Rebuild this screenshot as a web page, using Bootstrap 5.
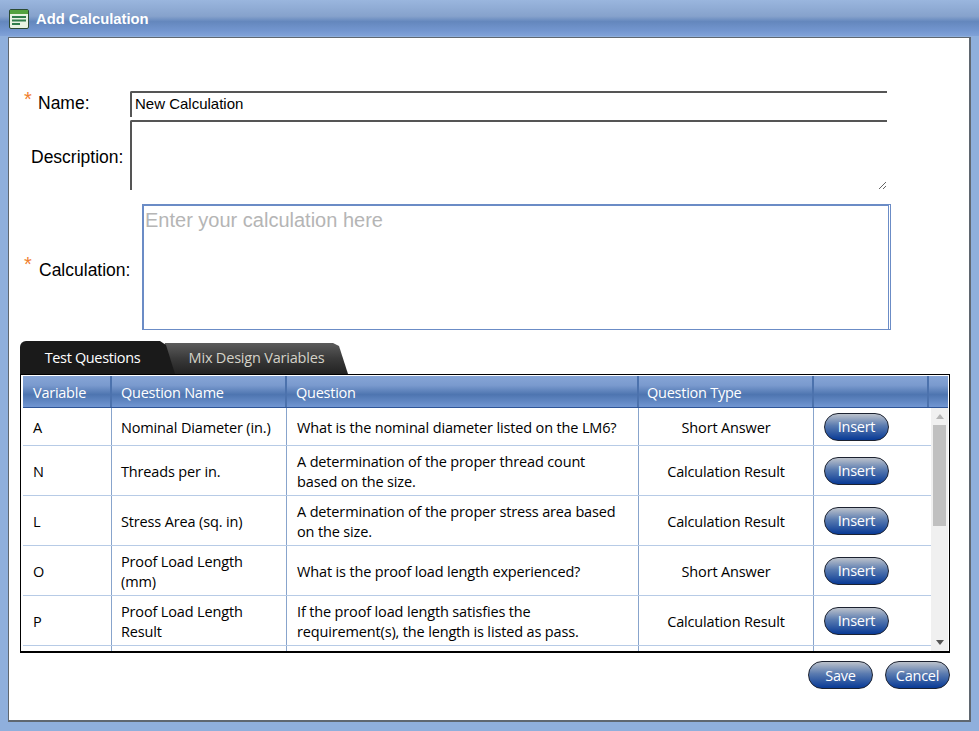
<!DOCTYPE html>
<html lang="en"><head><meta charset="utf-8"><title>Add Calculation</title>
<link href="https://cdn.jsdelivr.net/npm/bootstrap@5.3.0/dist/css/bootstrap.min.css" rel="stylesheet">
<style>
html,body{height:731px;overflow:hidden;background:#8fafdc;}
body{font-family:"Liberation Sans",Arial,sans-serif;color:#000;}
.win-title{height:36px;padding:2px 0 0 9px;gap:7px;background:linear-gradient(#9ab6de 0,#86a2cc 45%,#6487bd 60%,#7396cf 85%,#80a2d8 100%);color:#fff;font-weight:700;font-size:14.8px;}
.win-body{margin:1px 8px 0 8px;height:685px;background:#fff;border:solid #5f6770;border-width:1px 2px 2px 1px;width:963px;padding:0 19px 0 11px;}
.frm-row{display:flex;align-items:center;}
.req{color:#f08030;font-size:20px;width:14px;margin-left:4px;line-height:20px;flex:none;margin-top:-11px;}
.calc-row .req{margin-top:-6px;}
.lbl{font-size:17.5px;flex:none;margin:0;}
.lbl-n{width:92px;padding-bottom:2px;}
.lbl-c{width:104px;padding:6px 0 0 1px;}
.name-row{margin-top:53px;height:26px;}
.name-in{width:757px;height:26px;border:0;border-top:2px solid #555;border-left:2px solid #555;padding:0 3px 4px;font:15px "Liberation Sans",Arial,sans-serif;outline:0;border-radius:2px 0 0 0;}
.desc-row{margin-top:3px;height:70px;}
.desc-lbl{margin-left:11px;width:99px;padding-top:4px;}
.desc-in{width:757px;height:70px;border:0;border-top:2px solid #555;border-left:2px solid #555;outline:0;border-radius:2px 0 0 0;display:block;}
.calc-row{margin-top:14px;height:126px;}
.calc-in{width:749px;height:126px;border:2px solid #6b8cc6;border-right:3px double #6b8cc6;border-bottom-width:1px;outline:0;padding:3px 0 0 1px;font:20px "Liberation Sans",Arial,sans-serif;resize:none;}
.calc-in::placeholder{color:#b5b5b5;opacity:1;}
.tab-strip{margin-top:11px;height:33px;font:14.5px "Segoe UI","Open Sans",sans-serif;align-items:flex-end;}
.tab-a,.tab-b{display:flex;align-items:center;justify-content:center;text-decoration:none;}
.tab-a{width:155px;height:33px;background:#1a1a1a;color:#fff;border-radius:6px 6px 0 0;position:relative;z-index:1;padding-right:10px;clip-path:polygon(0 0,140px 0,146px 4px,155px 100%,0 100%);letter-spacing:-.35px;}
.tab-b{width:193px;height:31px;margin-left:-20px;color:#d4d2c8;background:linear-gradient(#5c5c5c,#3a3a3a 50%,#222);clip-path:polygon(0 100%,10px 0,178px 0,184px 3px,193px 100%);padding:0 0 2px 10px;letter-spacing:-.2px;}
.grid-box{height:279px;width:930px;border:1px solid #000;border-bottom-width:2px;padding:1px 1px 0 2px;background:#fff;overflow:hidden;display:flex;flex-direction:column;}
.grid-head{height:32px;display:flex;color:#fff;font:14.5px "Segoe UI","Open Sans",sans-serif;letter-spacing:-.25px;background:linear-gradient(#86a5d6,#7a9ace 30%,#4e75b0 60%,#7196d2);border-bottom:1px solid #2f5597;flex:none;}
.grid-head>div{border-right:2px solid #4c72ad;padding:1px 0 0 9px;display:flex;align-items:center;}
.grid-head>.c1{padding-left:10px;}
.grid-head>.c4{padding-left:8px;}
.c1{width:89px;flex:none;}.c2{width:175px;flex:none;}.c3{width:352px;flex:none;}.c4{width:175px;flex:none;}.c5{width:115px;flex:none;}
.grid-main{display:flex;flex:1;min-height:0;overflow:hidden;}
.grid-rows{width:908px;flex:none;}
.gr{display:flex;height:50px;border-bottom:1px solid #b7cbe6;font:14.5px "Segoe UI","Open Sans",sans-serif;letter-spacing:-.15px;line-height:20px;}
.gr>div{border-right:1px solid #88a4cc;padding:2px 10px 0;display:flex;align-items:center;}
.gr>.c2{padding:2px 20px 0 9px;}
.gr>.c3{padding-right:20px;}
.gr>.c4{justify-content:center;padding:2px 0 0;}
.gr>.c5{border-right:0;padding-top:0;}
.r1{height:38px;white-space:nowrap;}
.pill{width:65px;height:28px;border-radius:14px;border:1px solid #1c2230;color:#fff;padding:0;font:14.5px "Segoe UI","Open Sans",sans-serif;letter-spacing:-.25px;background:linear-gradient(#bcc2cb 0,#5a7bb0 45%,#083a96 100%);flex:none;}
.scr{width:17px;flex:none;background:#f0f0f0;display:flex;flex-direction:column;align-items:center;padding-top:6px;}
.scr-thumb{width:13px;height:101px;background:#c0c0c0;margin-top:6px;}
.scr-up{width:0;height:0;border:4px solid transparent;border-top:0;border-bottom:5px solid #b5b5b5;}
.scr-dn{width:0;height:0;border:4px solid transparent;border-bottom:0;border-top:5px solid #555;margin-top:auto;margin-bottom:6px;}
.act{margin-top:8px;gap:12px;width:930px;}
</style></head><body>
<div class="win-title d-flex align-items-center">
<svg width="20" height="20" viewBox="0 0 20 20" aria-hidden="true"><rect x=".5" y=".5" width="19" height="19" rx="1.5" fill="#e8f3e2" stroke="#2b4a33"/><rect x="1" y="1" width="18" height="4" fill="#53a23e"/><rect x="3" y="7" width="14" height="2" fill="#2f7d4a"/><rect x="3" y="10.5" width="14" height="2" fill="#2f7d4a"/><rect x="3" y="14" width="8" height="2" fill="#2f7d4a"/></svg>
<span>Add Calculation</span></div>
<div class="win-body">
<div class="frm-row name-row"><span class="req">*</span><label class="lbl lbl-n" for="n1">Name:</label><input id="n1" class="name-in" value="New Calculation"></div>
<div class="frm-row desc-row"><label class="lbl desc-lbl" for="d1">Description:</label><textarea id="d1" class="desc-in"></textarea></div>
<div class="frm-row calc-row"><span class="req">*</span><label class="lbl lbl-c" for="c1">Calculation:</label><textarea id="c1" class="calc-in" placeholder="Enter your calculation here"></textarea></div>
<div class="d-flex tab-strip"><a class="tab-a" href="#">Test Questions</a><a class="tab-b" href="#">Mix Design Variables</a></div>
<div class="grid-box">
<div class="grid-head"><div class="c1">Variable</div><div class="c2">Question Name</div><div class="c3">Question</div><div class="c4">Question Type</div><div class="c5"></div><div class="flex-grow-1 border-0"></div></div>
<div class="grid-main"><div class="grid-rows">
<div class="gr r1"><div class="c1">A</div><div class="c2">Nominal Diameter (in.)</div><div class="c3">What is the nominal diameter listed on the LM6?</div><div class="c4">Short Answer</div><div class="c5"><button class="pill">Insert</button></div></div>
<div class="gr"><div class="c1">N</div><div class="c2">Threads per in.</div><div class="c3">A determination of the proper thread count based on the size.</div><div class="c4">Calculation Result</div><div class="c5"><button class="pill">Insert</button></div></div>
<div class="gr"><div class="c1">L</div><div class="c2">Stress Area (sq. in)</div><div class="c3">A determination of the proper stress area based on the size.</div><div class="c4">Calculation Result</div><div class="c5"><button class="pill">Insert</button></div></div>
<div class="gr"><div class="c1">O</div><div class="c2">Proof Load Length (mm)</div><div class="c3">What is the proof load length experienced?</div><div class="c4">Short Answer</div><div class="c5"><button class="pill">Insert</button></div></div>
<div class="gr"><div class="c1">P</div><div class="c2">Proof Load Length Result</div><div class="c3">If the proof load length satisfies the requirement(s), the length is listed as pass.</div><div class="c4">Calculation Result</div><div class="c5"><button class="pill">Insert</button></div></div>
<div class="gr"><div class="c1"></div><div class="c2"></div><div class="c3"></div><div class="c4"></div><div class="c5"></div></div>
</div><div class="scr"><span class="scr-up"></span><span class="scr-thumb"></span><span class="scr-dn"></span></div></div>
</div>
<div class="d-flex justify-content-end act"><button class="pill">Save</button><button class="pill">Cancel</button></div>
</div>
<script src="https://cdn.jsdelivr.net/npm/bootstrap@5.3.0/dist/js/bootstrap.bundle.min.js"></script>
</body></html>
